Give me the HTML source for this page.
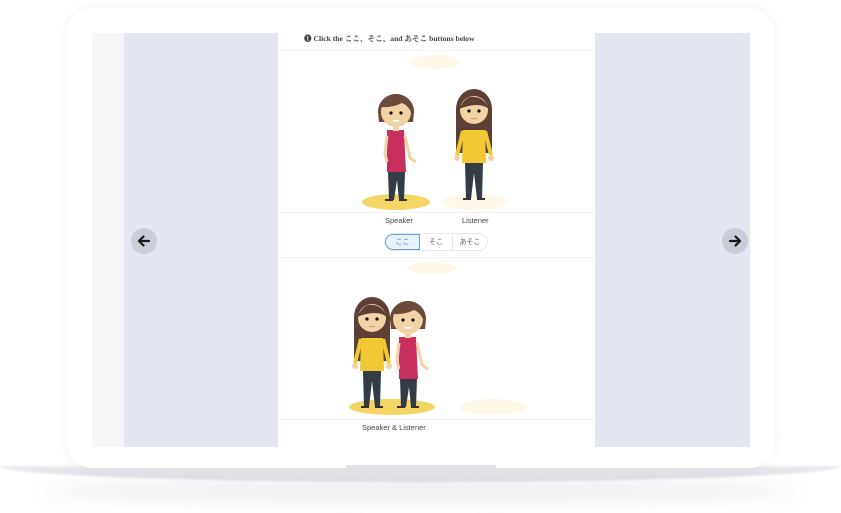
<!DOCTYPE html>
<html><head><meta charset="utf-8"><style>
html,body{margin:0;padding:0;width:841px;height:513px;overflow:hidden;background:#fff;font-family:"Liberation Sans","Noto Sans CJK JP",sans-serif}
.abs{position:absolute}
</style></head><body>
<div class="abs" style="left:0;top:466px;width:841px;height:16px;background:linear-gradient(#ececf0,#d8d8de);border-radius:0 0 50% 50%/0 0 100% 100%;filter:blur(1px)"></div>
<div class="abs" style="left:40px;top:480px;width:760px;height:22px;background:#e2e2e8;border-radius:50%;filter:blur(9px);opacity:.6"></div>
<div class="abs" style="left:67px;top:8px;width:708px;height:460px;background:#fff;border-radius:26px;box-shadow:0 0 12px rgba(0,0,0,.06)"></div>
<div class="abs" style="left:346px;top:465px;width:150px;height:6px;background:#e2e2e8;border-radius:0 0 4px 4px"></div>
<div class="abs" style="left:92px;top:33px;width:32px;height:414px;background:#f6f6f9"></div>
<div class="abs" style="left:124px;top:33px;width:154px;height:414px;background:#e4e7f1"></div>
<div class="abs" style="left:595px;top:33px;width:155px;height:414px;background:#e4e7f1"></div>
<div class="abs" style="left:278px;top:33px;width:317px;height:414px;background:#fff"></div>
<div class="abs" style="left:278px;top:50px;width:317px;height:1px;background:#f2f2f4"></div>
<div class="abs" style="left:278px;top:212px;width:317px;height:1px;background:#f2f2f4"></div>
<div class="abs" style="left:278px;top:257px;width:317px;height:1px;background:#f2f2f4"></div>
<div class="abs" style="left:278px;top:419px;width:317px;height:1px;background:#f2f2f4"></div>
<div class="abs" style="left:304px;top:33px;font:bold 7.6px 'Liberation Serif','Noto Serif CJK SC',serif;color:#444;white-space:nowrap">&#10102; Click the ここ、そこ、and あそこ buttons below</div>
<div class="abs" style="left:385px;top:216px;font-size:7.5px;color:#444">Speaker</div>
<div class="abs" style="left:462px;top:216px;font-size:7.5px;color:#444">Listener</div>
<div class="abs" style="left:362px;top:423px;font-size:7.5px;color:#444">Speaker &amp; Listener</div>
<div class="abs" style="left:384px;top:233px;width:104px;height:18px;border:1px solid #e6e8ee;border-radius:10px;font-size:7px;color:#666;display:flex;overflow:hidden;box-sizing:border-box">
<div style="width:33px;background:#eaf2fc;border:1px solid #6aa0e0;border-radius:10px 0 0 10px;display:flex;align-items:center;justify-content:center;color:#4a7fc8">ここ</div>
<div style="width:32px;border-right:1px solid #e6e8ee;display:flex;align-items:center;justify-content:center">そこ</div>
<div style="flex:1;display:flex;align-items:center;justify-content:center">あそこ</div></div>
<div class="abs" style="left:131px;top:228px;width:26px;height:26px;border-radius:50%;background:#c9cdd8"><svg width="26" height="26"><path d="M18,13 H8 M12.5,8.5 L8,13 L12.5,17.5" stroke="#1a1a1a" stroke-width="2.2" fill="none" stroke-linecap="round" stroke-linejoin="round"/></svg></div>
<div class="abs" style="left:722px;top:228px;width:26px;height:26px;border-radius:50%;background:#c9cdd8"><svg width="26" height="26"><path d="M8,13 H18 M13.5,8.5 L18,13 L13.5,17.5" stroke="#1a1a1a" stroke-width="2.2" fill="none" stroke-linecap="round" stroke-linejoin="round"/></svg></div>
<svg class="abs" style="left:0;top:0" width="841" height="513">
<defs>
<g id="sp">
<path d="M-9,-72 L8,-72 L10,-30 L-9,-30Z" fill="#c7305e"/>
<path d="M-8,-30 L9,-30 L8,-2 L3,-2 L1,-22 L-2,-2 L-7,-2Z" fill="#333b45"/>
<path d="M9,-66 L14,-44 L20,-40" stroke="#f2d3a4" stroke-width="3" fill="none"/>
<path d="M-9,-66 L-11,-48 L-9,-40" stroke="#f2d3a4" stroke-width="3" fill="none"/>
<rect x="-3" y="-77" width="6" height="6" fill="#f2d3a4"/>
<path d="M-18,-90 A18,18 0 0 1 18,-90 L17,-80 L-17,-80Z" fill="#6b4a3c"/>
<circle cx="0" cy="-90" r="15" fill="#f2d3a4"/>
<path d="M-18,-90 A18,18 0 0 1 18,-90 L17,-84 Q14,-96 6,-99 Q-4,-94 -15,-95 Q-16,-90 -17,-84Z" fill="#6b4a3c"/>
<circle cx="-5" cy="-89" r="1.6" fill="#111"/><circle cx="5" cy="-89" r="1.6" fill="#111"/>
<path d="M-4,-82 Q0,-78 4,-82Z" fill="#fff"/>
<rect x="-11" y="-3" width="8" height="2" fill="#333"/><rect x="3" y="-3" width="8" height="2" fill="#333"/>
</g>
<g id="li">
<path d="M-18,-92 A18,20 0 0 1 18,-92 L18,-48 L-18,-48Z" fill="#5c4035"/>
<path d="M-11,-71 L11,-71 L12,-38 L-12,-38Z" fill="#f2c935"/>
<path d="M-9,-38 L9,-38 L8,-2 L3,-2 L0,-28 L-3,-2 L-8,-2Z" fill="#333b45"/>
<path d="M-11,-70 L-17,-46" stroke="#f2c935" stroke-width="4"/><path d="M11,-70 L17,-46" stroke="#f2c935" stroke-width="4"/>
<circle cx="-17" cy="-43" r="3" fill="#f2d3a4"/><circle cx="17" cy="-43" r="3" fill="#f2d3a4"/>
<circle cx="0" cy="-91" r="14" fill="#f2d3a4"/>
<path d="M-15,-92 Q-8,-106 0,-104 Q10,-104 15,-92 Q5,-100 -15,-92Z" fill="#5c4035"/>
<circle cx="-5" cy="-90" r="1.6" fill="#111"/><circle cx="5" cy="-90" r="1.6" fill="#111"/>
<path d="M-3,-83 Q0,-81 3,-83" stroke="#a07050" stroke-width=".6" fill="none"/>
<rect x="-11" y="-3" width="8" height="2" fill="#333"/><rect x="3" y="-3" width="8" height="2" fill="#333"/>
</g></defs>
<ellipse cx="435" cy="62" rx="25" ry="7" fill="#fdf8e8"/>
<ellipse cx="432" cy="268" rx="25" ry="6" fill="#fdf8e8"/>
<ellipse cx="396" cy="202" rx="34" ry="8" fill="#f4d566"/>
<ellipse cx="475" cy="202" rx="33" ry="8" fill="#fdf8e8"/>
<ellipse cx="392" cy="407" rx="43" ry="8" fill="#f4d566"/>
<ellipse cx="493" cy="407" rx="34" ry="8" fill="#fdf8e8"/>
<use href="#sp" x="396" y="202"/>
<use href="#li" x="474" y="201"/>
<use href="#li" x="372" y="409"/>
<use href="#sp" x="408" y="409"/>
</svg>
</body></html>
